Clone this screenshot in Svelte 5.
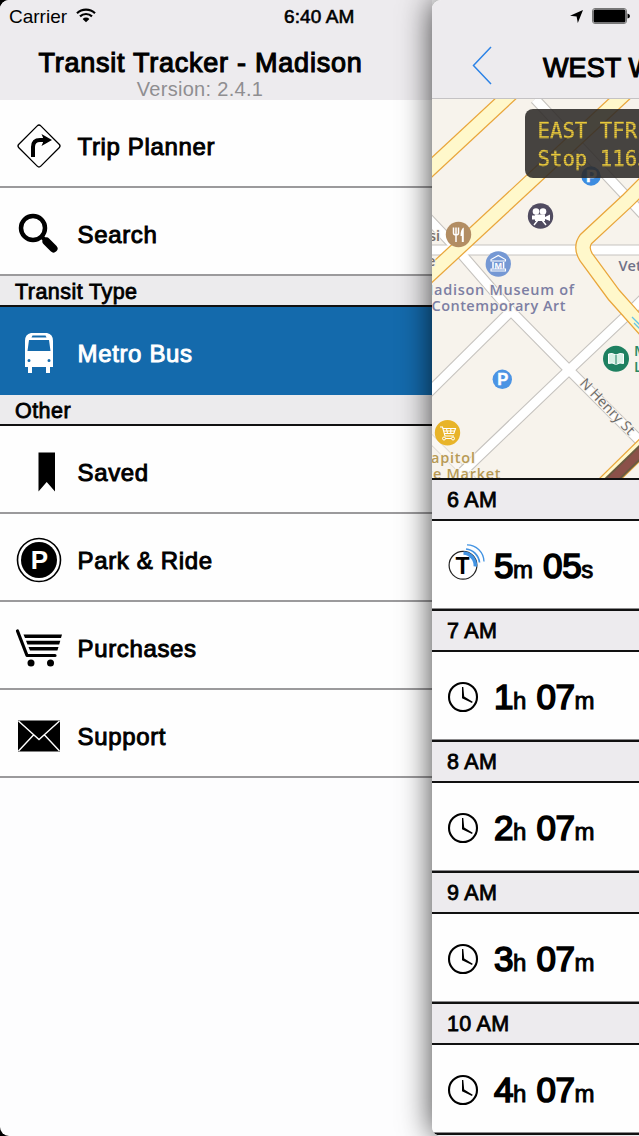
<script>
  const sections = [
    {
      title: '',
      items: [
        { icon: 'trip', label: 'Trip Planner' },
        { icon: 'search', label: 'Search' }
      ]
    },
    {
      title: 'Transit Type',
      items: [{ icon: 'bus', label: 'Metro Bus' }]
    },
    {
      title: 'Other',
      items: [
        { icon: 'saved', label: 'Saved' },
        { icon: 'park', label: 'Park & Ride' },
        { icon: 'cart', label: 'Purchases' },
        { icon: 'mail', label: 'Support' }
      ]
    }
  ];

  const arrivals = [
    { hour: '6 AM', live: true, a: '5', au: 'm', b: '05', bu: 's' },
    { hour: '7 AM', a: '1', au: 'h', b: '07', bu: 'm' },
    { hour: '8 AM', a: '2', au: 'h', b: '07', bu: 'm' },
    { hour: '9 AM', a: '3', au: 'h', b: '07', bu: 'm' },
    { hour: '10 AM', a: '4', au: 'h', b: '07', bu: 'm' }
  ];

  let selected = 'bus';

  const greyRoads = [
    'M535 99L623 193L652 224',
    'M424 214L458 250L511 311L569 370L650 451',
    'M420 401L511 311',
    'M452 482L569 370L625 317L650 292',
    'M424 250H650'
  ];
  const yellowRoads = [
    'M422 176.5L516 89',
    'M422 282L630 89',
    'M655 173L627 201L586 239Q580 247 586 257L614 295L655 341'
  ];
</script>

<div class="screen">
  <div class="status-bar">
    <span class="carrier">Carrier</span>
    <svg class="wifi" width="20" height="15" viewBox="0 0 20 15" fill="none" stroke="#000" stroke-width="2.200">
      <path d="M1 5.200C6 .4 14 .4 19 5.200" />
      <path d="M4 8.400C7.400 5.200 12.600 5.200 16 8.400" />
      <path d="M6.600 10.900C8.600 9.100 11.400 9.100 13.400 10.900L10 14.300Z" fill="#000" stroke="none" />
    </svg>
    <span class="clock">6:40 AM</span>
    <svg class="location" width="13" height="13" viewBox="0 0 13 13">
      <path d="M13 0L7.800 13L6.600 6.500L0 5.700Z" />
    </svg>
    <svg class="battery" width="38" height="16" viewBox="0 0 38 16">
      <rect x=".5" y=".5" width="34" height="15" rx="2.500" fill="none" stroke="#777" />
      <rect x="1.500" y="1.500" width="32" height="13" rx="1.500" />
      <path d="M35.500 5.500Q38 6 38 8T35.500 10.500Z" />
    </svg>
  </div>

  <nav class="menu">
    <header class="menu-header">
      <h1>Transit Tracker - Madison</h1>
      <p>Version: 2.4.1</p>
    </header>
    {#each sections as section}
      {#if section.title}
        <h2 class="menu-title">{section.title}</h2>
      {/if}
      {#each section.items as item}
        <button class="menu-item" class:active={selected === item.icon} on:click={() => (selected = item.icon)}>
          <svg class="menu-icon" width="48" height="48" viewBox="0 0 48 48">
            {#if item.icon === 'trip'}
              <rect x="8.500" y="8.500" width="31" height="31" rx="2.500" transform="rotate(45 24 24)" fill="none" stroke="#000" stroke-width="1.300" />
              <path d="M18 35V25Q18 18 25 18H29" fill="none" stroke="#000" stroke-width="4" />
              <path d="M26.500 12L37 18L26.500 24L29 18Z" />
            {:else if item.icon === 'search'}
              <circle cx="18" cy="18" r="12" fill="none" stroke="#000" stroke-width="4.500" />
              <path d="M26 26L31 31" stroke="#000" stroke-width="4" />
              <path d="M31.500 31.500L38.500 38.500" stroke="#000" stroke-width="8" stroke-linecap="round" />
            {:else if item.icon === 'bus'}
              <path fill="#fff" fill-rule="evenodd" d="M16 4H32Q38 5 38 12V38H35V44H31V38H17V44H13V38H10V12Q10 5 16 4ZM17.500 6.500L16.500 8.500H31.500L30.500 6.500ZM14 11L12.500 22H35.500L34 11ZM14 30A1.500 1.500 0 1 0 14 33A1.500 1.500 0 1 0 14 30ZM34 30A1.500 1.500 0 1 0 34 33A1.500 1.500 0 1 0 34 30Z" />
            {:else if item.icon === 'saved'}
              <path d="M23.500 4.500H40V43.500L31.700 34L23.500 43.500Z" />
            {:else if item.icon === 'park'}
              <circle cx="24" cy="24" r="21.500" fill="#fff" stroke="#000" stroke-width="1.600" />
              <circle cx="24" cy="24" r="18" />
              <text x="24.500" y="33" class="park-letter">P</text>
            {:else if item.icon === 'cart'}
              <path d="M2.500 7L12 31.500H40" fill="none" stroke="#000" stroke-width="3.200" stroke-linecap="round" stroke-linejoin="round" />
              <path d="M8.500 10.500H47L46 14H10ZM11 16.800H45.300L44.200 20.400H12.500ZM13.500 23H43.500L42.400 26.500H15Z" />
              <circle cx="16" cy="39" r="3.500" />
              <circle cx="35.500" cy="39" r="3.500" />
            {:else}
              <path d="M3 8.500H45V39.500H3Z" />
              <path d="M3.500 9L24 27.500L44.500 9M3.500 39L18.500 23M44.500 39L29.500 23" fill="none" stroke="#fff" stroke-width="1.400" />
            {/if}
          </svg>
          <span>{item.label}</span>
        </button>
      {/each}
    {/each}
  </nav>

  <main class="front">
    <header class="front-header">
      <svg width="20" height="39" viewBox="0 0 20 39">
        <path d="M19 1L1.500 19.500L19 38" fill="none" stroke="#2d83e6" stroke-width="1.500" />
      </svg>
      <h1>WEST WASHINGTON</h1>
    </header>

    <div class="map">
      <svg width="207" height="379" viewBox="432 99 207 379">
        <rect x="432" y="99" width="207" height="379" fill="#f7f3ec" />
        <g fill="none">
          <path d="M424 432L474 482" stroke="#ddd9d2" stroke-width="9" />
          <path d="M424 432L474 482" stroke="#fbf8f3" stroke-width="7" />
          {#each greyRoads as d}
            <path {d} stroke="#c6c3bf" stroke-width="11" />
          {/each}
          {#each greyRoads as d}
            <path {d} stroke="#fff" stroke-width="8.800" />
          {/each}
          {#each yellowRoads as d}
            <path {d} stroke="#e9a63b" stroke-width="15.500" />
          {/each}
          {#each yellowRoads as d}
            <path {d} stroke="#fff8cb" stroke-width="13" />
          {/each}
          <path d="M599 490L652 438" stroke="#e9a63b" stroke-width="17" />
          <path d="M599 490L652 438" stroke="#fff8cb" stroke-width="14.500" />
          <path d="M602 489L655 438" stroke="#6b5a40" stroke-width="12" />
          <path d="M602 489L655 438" stroke="#8b5149" stroke-width="8" />
          <path d="M632 317L641 326M634 323L641 330" stroke="#65c5e8" stroke-width="1.300" />
        </g>

        <g class="labels">
          <text x="429" y="241" fill="#77706a">si</text>
          <text x="427" y="266" fill="#77706a">e</text>
          <text x="574" y="295" text-anchor="end" textLength="154" fill="#7d7fa3">Madison Museum of</text>
          <text x="431.500" y="311" textLength="134" fill="#7d7fa3">Contemporary Art</text>
          <text x="618.500" y="271" fill="#6f7187">Veterans</text>
          <text x="475" y="463" text-anchor="end" textLength="54" fill="#b79a54">Capitol</text>
          <text x="500.500" y="479" text-anchor="end" textLength="112" fill="#b79a54">Square Market</text>
          <text x="634" y="356" fill="#2a8862">Madison</text>
          <text x="634" y="372" fill="#2a8862">Library</text>
          <text class="street" transform="translate(579 384) rotate(46)" textLength="72">N Henry St</text>
        </g>

        <circle cx="591" cy="176" r="9.700" fill="#3d8ce0" />
        <text class="pin-p" x="591.500" y="182">P</text>
        <circle cx="502.300" cy="379.300" r="9.700" fill="#4c94e4" />
        <text class="pin-p" x="502.800" y="385.300">P</text>

        <circle cx="540.500" cy="216" r="12.700" fill="#504b60" />
        <g fill="#fff">
          <circle cx="536" cy="211.500" r="3.300" />
          <circle cx="543" cy="211.500" r="3.300" />
          <path d="M535 214.500H545V221H535ZM545 217L550 214.500V221L545 219ZM532 215.500H535V219.500H532Z" />
          <path d="M538 220L534 225M542 220L546 225" stroke="#fff" stroke-width="1.500" />
        </g>

        <circle cx="458.500" cy="234.500" r="12.700" fill="#b28d63" />
        <path d="M453.500 227.500V233Q453.500 235 456 235T458.500 233V227.500M456 227.500V242" fill="none" stroke="#fff" stroke-width="1.500" />
        <path d="M463.800 227.500V242H461.800V236H460.500Q460.500 229 463.800 227.500Z" fill="#fff" />

        <circle cx="498.300" cy="264" r="12.700" fill="#7598d4" />
        <path d="M491 261V259.500L498.300 255.500L505.500 259.500V261ZM491 269H505.500V271H491Z" fill="none" stroke="#fff" stroke-width="1.100" />
        <path d="M493 262V268.500M503.600 262V268.500" stroke="#fff" stroke-width="1.500" />
        <text class="museum-m" x="498.300" y="268.500">M</text>

        <circle cx="447.500" cy="432.800" r="12.700" fill="#e8b429" />
        <path d="M440 427H442.500L445 436H454M443 428.500H455.500L453.800 433.500H444.300M446.500 428.500L447.500 433.500M450.800 428.500V433.500M443.700 431H454.500" fill="none" stroke="#fff" stroke-width="1.100" />
        <path d="M443.500 438.500H454" stroke="#fff" />
        <circle cx="444" cy="438.500" r="1.500" fill="#e8b429" stroke="#fff" />
        <circle cx="453" cy="438.500" r="1.500" fill="#e8b429" stroke="#fff" />

        <circle cx="616" cy="358.700" r="13" fill="#1e8060" />
        <path d="M616 355Q612 352.500 608.500 354V363.500Q612 362 616 364.500Q620 362 623.500 363.500V354Q620 352.500 616 355Z" fill="#d9f0e5" stroke="#fff" />
        <path d="M616 355V364.500" stroke="#1e8060" />
      </svg>
      <div class="sign">
        <span>EAST TFR</span>
        <span>Stop 1163</span>
      </div>
    </div>

    {#each arrivals as arrival}
      <h2 class="hour">{arrival.hour}</h2>
      <div class="arrival">
        {#if arrival.live}
          <svg class="live" width="40" height="40" viewBox="0 0 40 40">
            <circle cx="16" cy="19.300" r="13.900" fill="#fff" stroke="#222" stroke-width="1.200" />
            <text class="live-t" x="15.500" y="27.500">T</text>
            <g fill="none" stroke="#4293e2">
              <path d="M16.500 7A12.500 12.500 0 0 1 28.300 20.500" stroke-width="3.500" />
              <path d="M19 3A15 15 0 0 1 32.500 16.500" stroke-width="1.700" />
              <path d="M20 -1.200A17 17 0 0 1 37 15.500" stroke-width="1.300" />
            </g>
          </svg>
        {:else}
          <svg width="40" height="40" viewBox="0 0 40 40">
            <circle cx="16" cy="20" r="14" fill="none" stroke="#000" stroke-width="2.100" />
            <path d="M15 10H16.300L17.200 19.400L25.700 24.700L25 26L15 21.200Z" />
          </svg>
        {/if}
        <p class="countdown">
          <b>{arrival.a}</b><small>{arrival.au}</small>
          <b>{arrival.b}</b><small>{arrival.bu}</small>
        </p>
      </div>
    {/each}
    <div class="hour next"></div>
  </main>
</div>

<style>
  :global(body) {
    margin: 0;
    background: #000;
  }

  .screen {
    display: grid;
    grid-template-columns: 432px 207px;
    grid-template-rows: 32px 1104px;
    width: 639px;
    height: 1136px;
    overflow: hidden;
    background: #fdfdfe;
    border-radius: 9px 0 0 9px;
    font-family: 'Liberation Sans', Arial, sans-serif;
    color: #000;
  }

  h1,
  h2,
  p {
    margin: 0;
    font-weight: 400;
  }

  .status-bar {
    grid-area: 1 / 1 / 2 / 3;
    z-index: 2;
    display: flex;
    align-items: center;
    padding: 1px 0 0 9px;
    font-size: 19px;
  }

  .carrier {
    width: 58px;
  }

  .wifi {
    margin: 0 0 2px 9px;
  }

  .clock {
    width: 72px;
    margin-left: 188px;
    -webkit-text-stroke: 0.6px #000;
    white-space: nowrap;
    letter-spacing: 0.1px;
  }

  .location {
    margin: 0 0 1px 214px;
  }

  .battery {
    margin: 0 0 1px 9px;
  }

  .menu {
    grid-area: 1 / 1 / 3 / 2;
  }

  .menu-header {
    box-sizing: border-box;
    height: 100px;
    padding-top: 48px;
    padding-right: 32px;
    background: #edebee;
    text-align: center;
  }

  .menu-header h1 {
    padding-left: 1px;
    font-size: 27px;
    line-height: 30px;
    letter-spacing: 0.75px;
    -webkit-text-stroke: 1.1px #000;
    white-space: nowrap;
  }

  .menu-header p {
    font-size: 20px;
    line-height: 22px;
    letter-spacing: 0.3px;
    color: #8f8e91;
  }

  .menu-title {
    box-sizing: border-box;
    height: 31px;
    padding-left: 15px;
    border-bottom: 2px solid #111;
    background: #ecebed;
    font-size: 21.5px;
    line-height: 33px;
    letter-spacing: 0.45px;
    -webkit-text-stroke: 0.8px #000;
  }

  .menu-item {
    box-sizing: border-box;
    display: flex;
    align-items: center;
    gap: 14.5px;
    width: 100%;
    height: 88px;
    padding: 6px 0 0 15px;
    border: 0;
    border-bottom: 2px solid #9b9a9c;
    background: #fefefe;
    color: #000;
    font-family: inherit;
    font-size: 24px;
    letter-spacing: 0.65px;
    text-align: left;
    -webkit-text-stroke: 0.95px currentColor;
  }

  .menu-item span {
    padding-top: 1px;
  }

  .menu-item.active {
    border-bottom-color: #146aac;
    background: #146aac;
    color: #fff;
  }

  .menu-icon {
    -webkit-text-stroke: 0;
  }

  .park-letter {
    fill: #fff;
    font-size: 26px;
    font-weight: 700;
    letter-spacing: 0;
    text-anchor: middle;
  }

  .front {
    grid-area: 1 / 2 / 3 / 3;
    z-index: 1;
    overflow: hidden;
    border-radius: 9px 0 0 9px;
    background: #fff;
    box-shadow: 0 0 32px rgba(0, 0, 0, 0.75);
  }

  .front-header {
    box-sizing: border-box;
    display: flex;
    gap: 51px;
    height: 99px;
    padding: 46px 0 0 40px;
    border-bottom: 1px solid #c4c2c4;
    background: #edebee;
  }

  .front-header svg {
    flex-shrink: 0;
  }

  .front-header h1 {
    padding-top: 6px;
    font-size: 27px;
    line-height: 32px;
    letter-spacing: 0.1px;
    -webkit-text-stroke: 1.1px #000;
    white-space: nowrap;
  }

  .map {
    position: relative;
    height: 379px;
  }

  .map > svg {
    display: block;
  }

  .labels {
    font-family: 'Open Sans', 'Noto Sans', sans-serif;
    font-size: 14.5px;
    font-weight: 600;
    stroke: #f7f3ec;
    stroke-width: 2px;
    paint-order: stroke;
  }

  .street {
    fill: #6b6968;
    font-size: 14px;
    font-weight: 500;
  }

  .pin-p {
    fill: #fff;
    stroke: #fff;
    stroke-width: 0.4px;
    font-size: 16.5px;
    font-weight: 700;
    text-anchor: middle;
  }

  .museum-m {
    fill: #fff;
    font-size: 9px;
    font-weight: 700;
    text-anchor: middle;
  }

  .sign {
    position: absolute;
    top: 9.5px;
    left: 92.5px;
    display: flex;
    flex-direction: column;
    box-sizing: border-box;
    width: 190px;
    height: 69px;
    padding: 8px 0 0 13px;
    border-radius: 8px;
    background: rgba(45, 42, 40, 0.88);
    color: #ebca3c;
    font-family: 'DejaVu Sans Mono', monospace;
    font-size: 20.7px;
    line-height: 28px;
    white-space: pre;
    -webkit-text-stroke: 0.3px #ebca3c;
  }

  /* faint scanlines for the LED look */
  .sign span {
    -webkit-mask-image: repeating-linear-gradient(0deg, #000 0 1px, rgba(0, 0, 0, 0.7) 1px 2px);
    mask-image: repeating-linear-gradient(0deg, #000 0 1px, rgba(0, 0, 0, 0.7) 1px 2px);
  }

  .hour {
    box-sizing: border-box;
    height: 43px;
    padding-left: 15px;
    border-top: 2px solid #111;
    border-bottom: 2px solid #111;
    background: #edebee;
    font-size: 21.5px;
    line-height: 40px;
    letter-spacing: 0.3px;
    -webkit-text-stroke: 0.8px #000;
  }

  .arrival {
    box-sizing: border-box;
    display: flex;
    align-items: center;
    height: 88px;
    padding-left: 15px;
    padding-top: 2px;
    border-bottom: 1px solid #8b8a8c;
    background: #fefefe;
  }

  .live {
    overflow: visible;
  }

  .countdown {
    display: flex;
    align-items: baseline;
    padding-left: 7px;
  }

  .countdown b {
    font-size: 35px;
    font-weight: 400;
    letter-spacing: -0.4px;
    -webkit-text-stroke: 1.7px #000;
  }

  .countdown small {
    margin-right: 10px;
    font-size: 24px;
    -webkit-text-stroke: 0.9px #000;
  }

  .live-t {
    font-size: 23px;
    font-weight: 700;
    text-anchor: middle;
  }
</style>
